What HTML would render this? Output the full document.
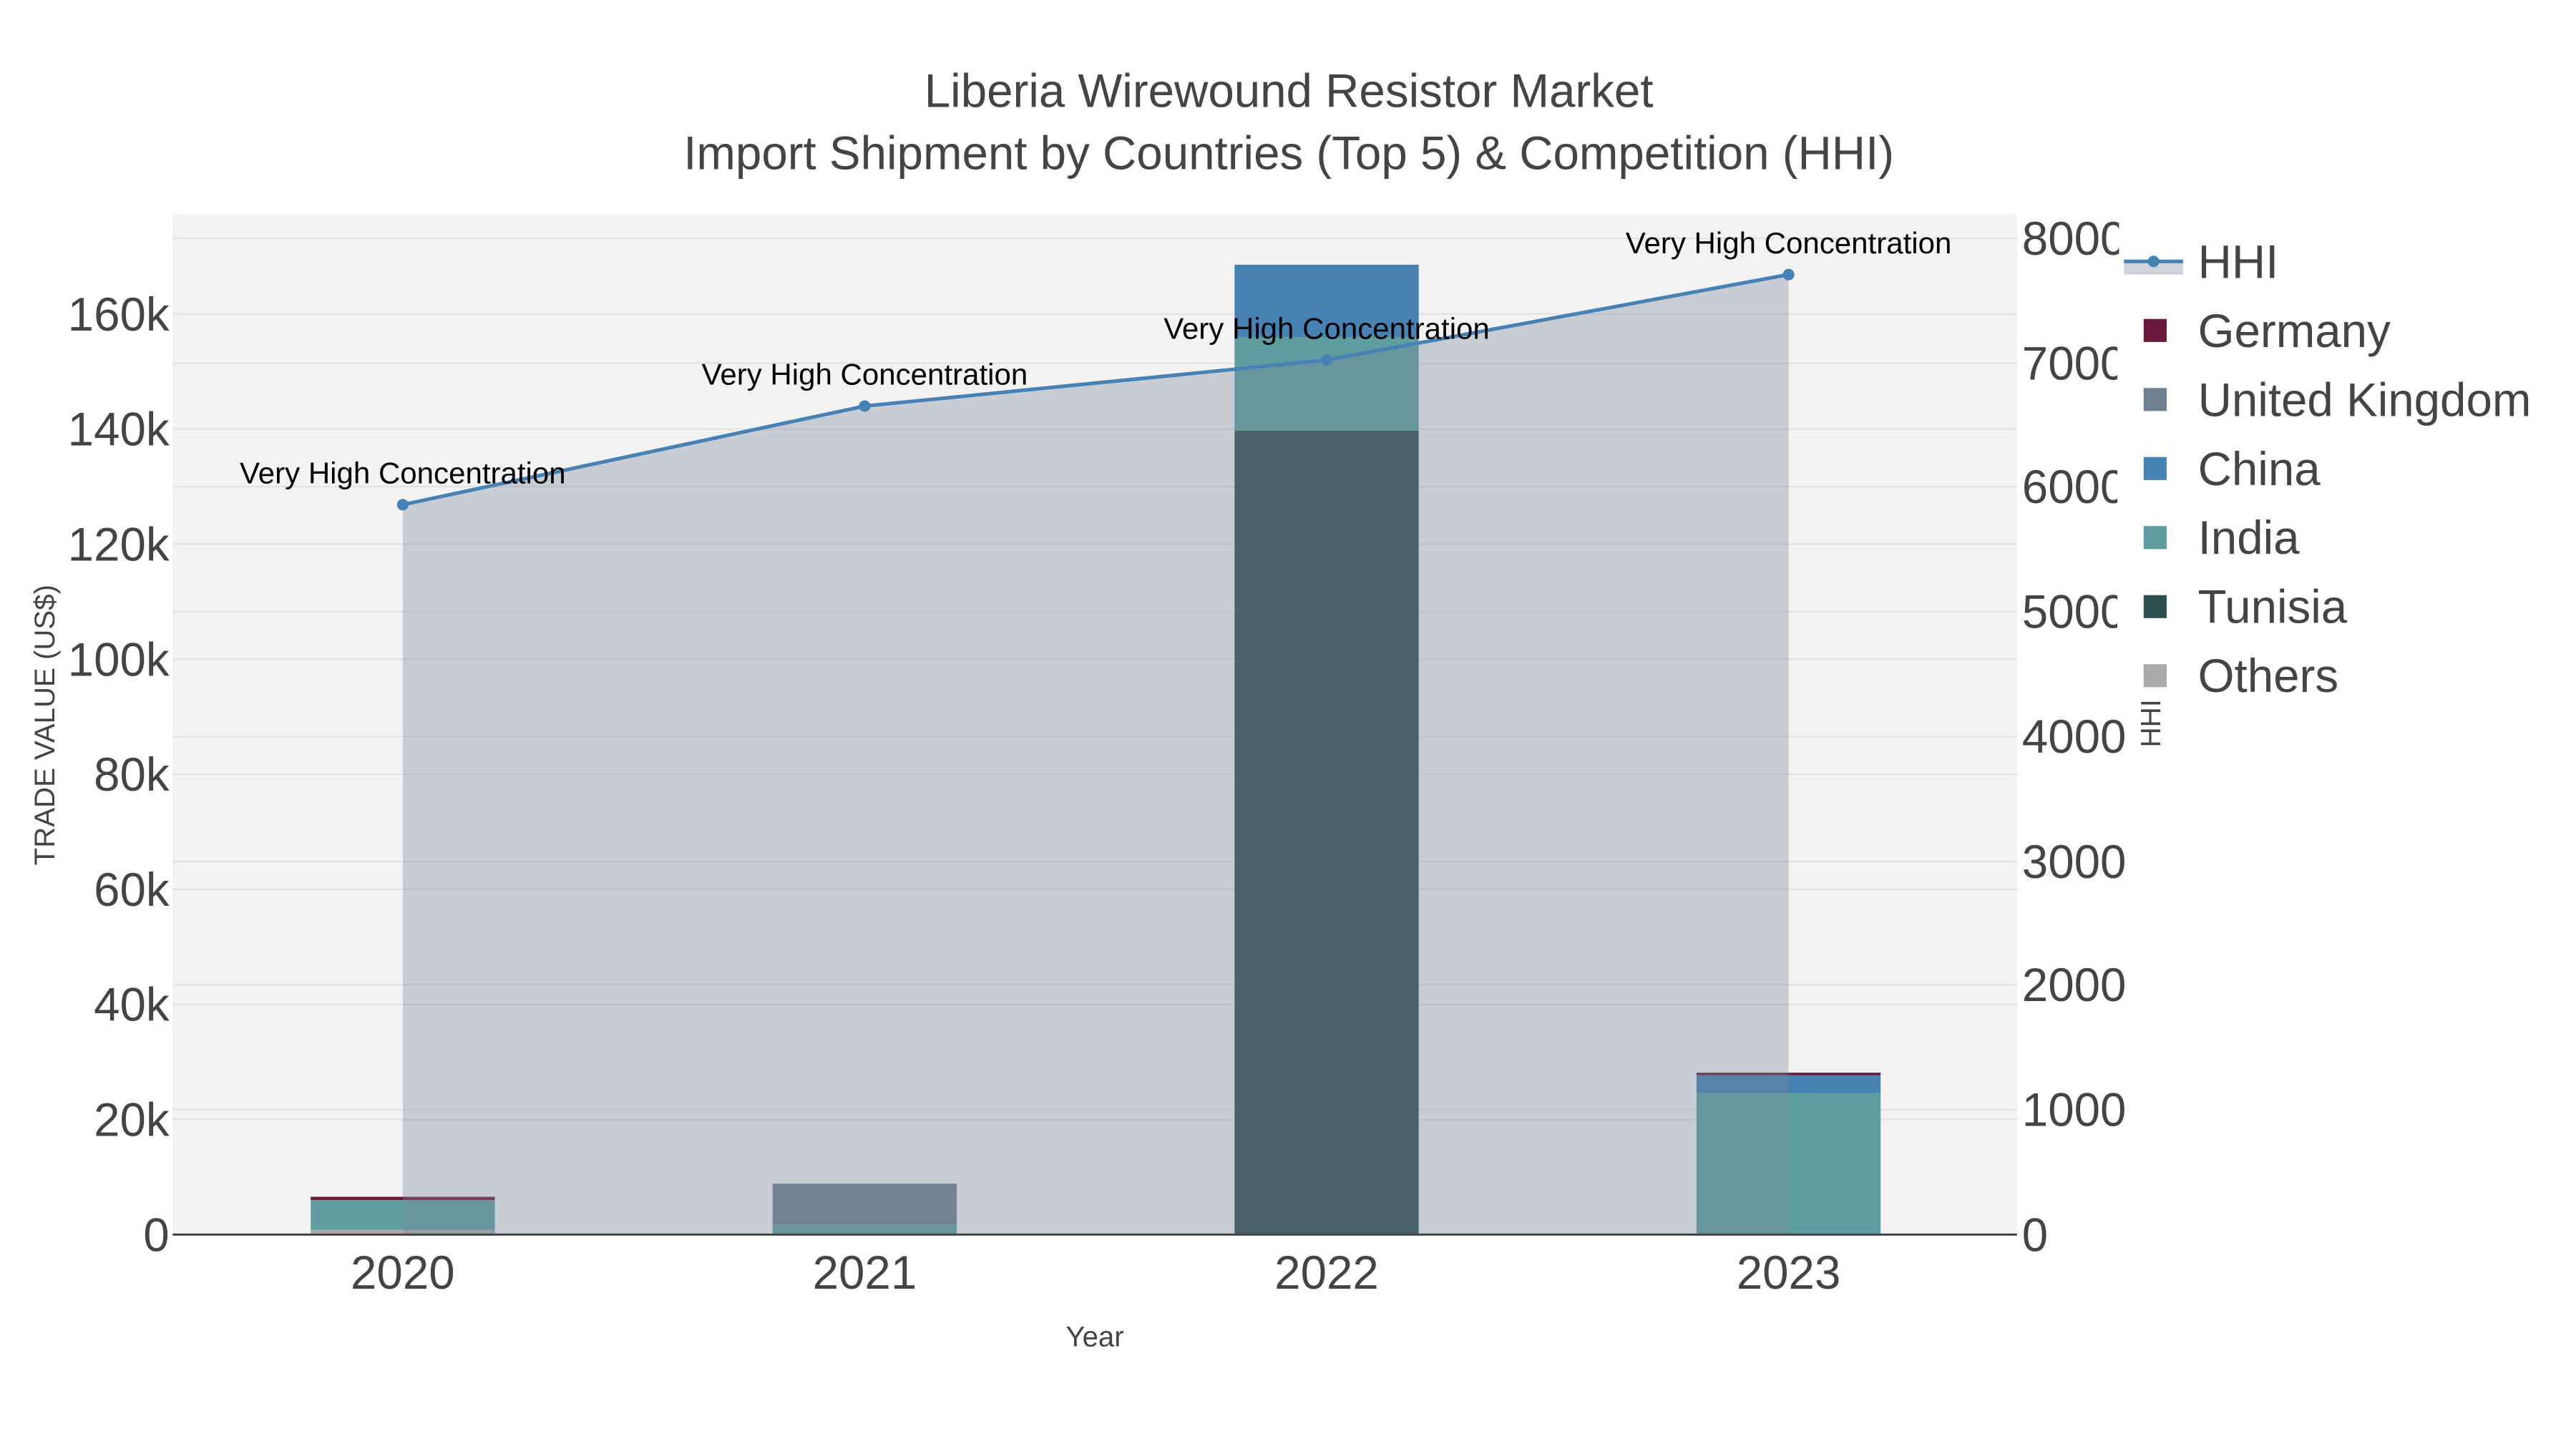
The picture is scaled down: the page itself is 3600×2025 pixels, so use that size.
<!DOCTYPE html>
<html><head><meta charset="utf-8"><style>
html,body{margin:0;padding:0;background:#fff;width:3600px;height:2025px;overflow:hidden}
svg{display:block}
text{font-family:"Liberation Sans",Arial,sans-serif}
</style></head><body>
<svg width="3600" height="2025" viewBox="0 0 1567 881.4" xmlns="http://www.w3.org/2000/svg">
<rect x="0" y="0" width="1567" height="882" fill="#fff"/>
<rect x="105" y="130" width="1122" height="621" fill="#f3f3f3"/>
<g stroke="#e2e2e2" stroke-width="1">
<line x1="105" x2="1227" y1="681" y2="681"/><line x1="105" x2="1227" y1="611" y2="611"/>
<line x1="105" x2="1227" y1="541" y2="541"/><line x1="105" x2="1227" y1="471" y2="471"/>
<line x1="105" x2="1227" y1="401" y2="401"/><line x1="105" x2="1227" y1="331" y2="331"/>
<line x1="105" x2="1227" y1="261" y2="261"/><line x1="105" x2="1227" y1="191" y2="191"/>
<line x1="105" x2="1227" y1="675" y2="675"/><line x1="105" x2="1227" y1="599" y2="599"/>
<line x1="105" x2="1227" y1="524" y2="524"/><line x1="105" x2="1227" y1="448" y2="448"/>
<line x1="105" x2="1227" y1="372" y2="372"/><line x1="105" x2="1227" y1="296" y2="296"/>
<line x1="105" x2="1227" y1="221" y2="221"/><line x1="105" x2="1227" y1="145" y2="145"/>
</g>
<rect x="189" y="748" width="112" height="3" fill="#aaaaaa"/>
<rect x="189" y="730" width="112" height="18" fill="#5f9ea0"/>
<rect x="189" y="728" width="112" height="2" fill="#6b1a3a"/>
<rect x="470" y="745" width="112" height="6" fill="#5f9ea0"/>
<rect x="470" y="720" width="112" height="25" fill="#708090"/>
<rect x="751" y="262" width="112" height="489" fill="#2f4f4f"/>
<rect x="751" y="205" width="112" height="57" fill="#5f9ea0"/>
<rect x="751" y="161" width="112" height="44" fill="#4682b4"/>
<rect x="1032" y="665" width="112" height="86" fill="#5f9ea0"/>
<rect x="1032" y="654" width="112" height="11" fill="#4682b4"/>
<rect x="1032" y="652.5" width="112" height="1.5" fill="#6b1a3a"/>
<polygon points="245,751 245,307 526,247 807,219 1088,167 1088,751" fill="rgb(119,136,153)" fill-opacity="0.35"/>
<polyline points="245,307 526,247 807,219 1088,167" fill="none" stroke="#4682b4" stroke-width="2.2"/>
<g fill="#4682b4"><circle cx="245" cy="307" r="3.5"/><circle cx="526" cy="247" r="3.5"/><circle cx="807" cy="219" r="3.5"/><circle cx="1088" cy="167" r="3.5"/></g>
<line x1="105" x2="1227" y1="751" y2="751" stroke="#444" stroke-width="1.3"/>
<g font-size="18.3" fill="#000" text-anchor="middle">
<text x="245" y="294">Very High Concentration</text>
<text x="526" y="234">Very High Concentration</text>
<text x="807" y="206">Very High Concentration</text>
<text x="1088" y="154">Very High Concentration</text>
</g>
<g font-size="28.5" fill="#444" text-anchor="middle">
<text x="784" y="65">Liberia Wirewound Resistor Market</text>
<text x="784" y="103">Import Shipment by Countries (Top 5) &amp; Competition (HHI)</text>
</g>
<g font-size="28.5" fill="#444" text-anchor="end">
<text x="103" y="761">0</text><text x="103" y="691">20k</text><text x="103" y="621">40k</text>
<text x="103" y="551">60k</text><text x="103" y="481">80k</text><text x="103" y="411">100k</text>
<text x="103" y="341">120k</text><text x="103" y="271">140k</text><text x="103" y="201">160k</text>
</g>
<g font-size="28.5" fill="#444" text-anchor="middle">
<text x="245" y="784">2020</text><text x="526" y="784">2021</text><text x="807" y="784">2022</text><text x="1088" y="784">2023</text>
</g>
<text x="666" y="819" font-size="17.5" fill="#444" text-anchor="middle">Year</text>
<text transform="translate(33,441) rotate(-90)" font-size="17.5" fill="#444" text-anchor="middle">TRADE VALUE (US$)</text>
<g font-size="28.5" fill="#444">
<text x="1230" y="761">0</text><text x="1230" y="685">1000</text><text x="1230" y="609">2000</text>
<text x="1230" y="534">3000</text><text x="1230" y="458">4000</text><text x="1230" y="382">5000</text>
<text x="1230" y="306">6000</text><text x="1230" y="231">7000</text><text x="1230" y="155">8000</text>
</g>
<rect x="1288" y="168" width="279" height="270" fill="#fff"/>
<rect x="1288" y="130" width="279" height="38" fill="#fff" fill-opacity="0"/>
<rect x="1289" y="130" width="278" height="40" fill="#fff"/>
<text transform="translate(1314,440) rotate(-90)" font-size="17" fill="#444" text-anchor="middle">HHI</text>
<rect x="1292" y="159" width="36" height="8" fill="rgb(119,136,153)" fill-opacity="0.35"/>
<line x1="1292" x2="1328" y1="159" y2="159" stroke="#4682b4" stroke-width="2.2"/>
<circle cx="1310" cy="159" r="3.5" fill="#4682b4"/>
<rect x="1304" y="194" width="14" height="14" fill="#6b1a3a"/>
<rect x="1304" y="236" width="14" height="14" fill="#708090"/>
<rect x="1304" y="278" width="14" height="14" fill="#4682b4"/>
<rect x="1304" y="320" width="14" height="14" fill="#5f9ea0"/>
<rect x="1304" y="362" width="14" height="14" fill="#2f4f4f"/>
<rect x="1304" y="404" width="14" height="14" fill="#aaaaaa"/>
<g font-size="28.5" fill="#444">
<text x="1337" y="169">HHI</text><text x="1337" y="211">Germany</text><text x="1337" y="253">United Kingdom</text>
<text x="1337" y="295">China</text><text x="1337" y="337">India</text><text x="1337" y="379">Tunisia</text><text x="1337" y="421">Others</text>
</g>
</svg>
</body></html>
